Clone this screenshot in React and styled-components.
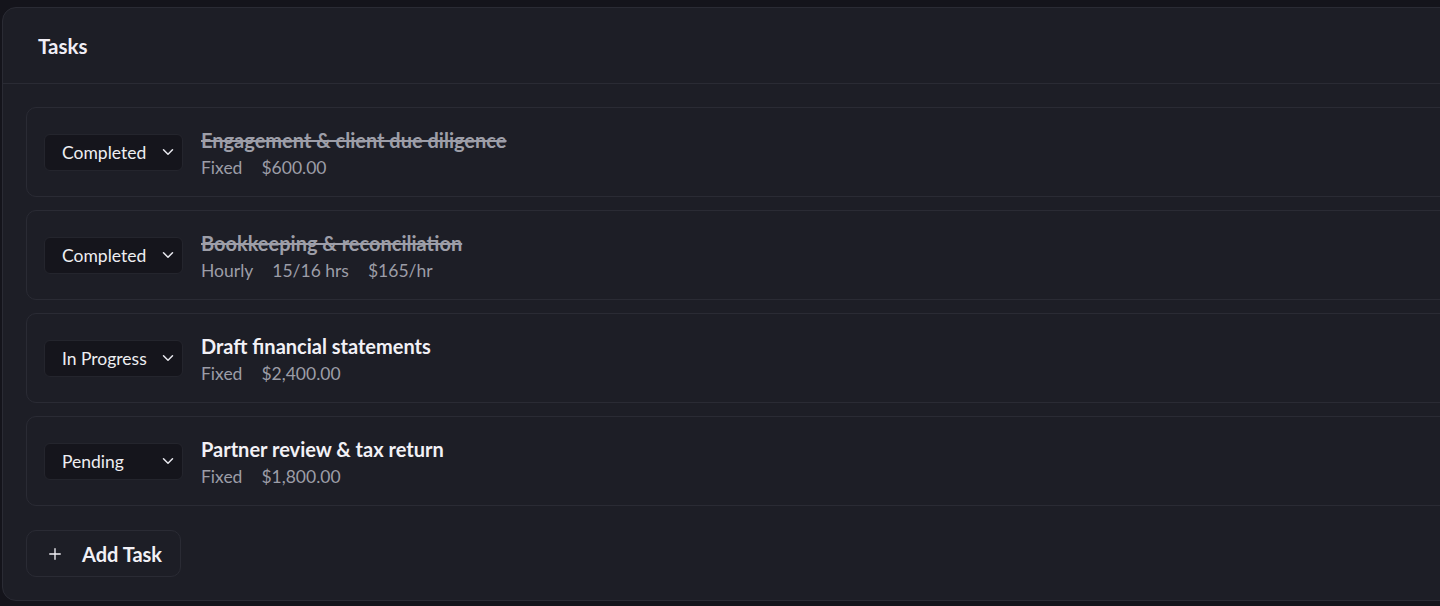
import React from 'react';
import styled, { createGlobalStyle } from 'styled-components';
import { ChevronDown, Plus } from 'lucide-react';

const GlobalStyle = createGlobalStyle`
    html, body {
        margin: 0;
        padding: 0;
        background: #14141b;
        font-family: "Lato", "Inter", sans-serif;
        overflow: hidden;
    }
`

const Page = styled.div`
    padding: 7px 0 0 2px;
    width: 1520px;
`

const Card = styled.div`
    background: #1d1e26;
    border: 1px solid #2a2b34;
    border-radius: 14px;
`

const Header = styled.div`
    height: 75px;
    display: flex;
    align-items: center;
    padding: 0 35px;
    border-bottom: 1px solid #2a2b34;
`

const Title = styled.h2`
    margin: 0;
    font-size: 20.5px;
    font-weight: 700;
    color: #f1eef6;
`

const Body = styled.div`
    padding: 23px;
    display: flex;
    flex-direction: column;
    gap: 13px;
`

const Row = styled.div`
    height: 88px;
    display: flex;
    align-items: center;
    gap: 18px;
    padding: 0 17px;
    border: 1px solid #2a2b34;
    border-radius: 10px;
`

const Select = styled.div`
    width: 139px;
    height: 37px;
    box-sizing: border-box;
    display: flex;
    align-items: center;
    justify-content: space-between;
    padding: 0 5px 0 17px;
    background: #15151c;
    border: 1px solid #24252d;
    border-radius: 6px;
    color: #eeeef2;
    font-size: 17.5px;
`

const Info = styled.div`
    display: flex;
    flex-direction: column;
    gap: 5px;
    padding-top: 2px;
`

const TaskName = styled.div`
    font-size: 20px;
    font-weight: 700;
    color: ${({ done }) => (done ? '#9d9ea8' : '#f2f1f6')};
    text-decoration: ${({ done }) => (done ? 'line-through' : 'none')};
`

const Meta = styled.div`
    display: flex;
    gap: 19px;
    font-size: 17.5px;
    color: #9c9da7;
`

const AddButton = styled.button`
    margin-top: 11px;
    align-self: flex-start;
    width: 155px;
    height: 47px;
    display: flex;
    align-items: center;
    gap: 18px;
    padding: 0 0 0 19px;
    background: transparent;
    border: 1px solid #2a2b34;
    border-radius: 10px;
    color: #f2f1f6;
    font-family: inherit;
    font-size: 20px;
    font-weight: 700;
    cursor: pointer;
`

const tasks = [
    { status: 'Completed', name: 'Engagement & client due diligence', meta: ['Fixed', '$600.00'], done: true },
    { status: 'Completed', name: 'Bookkeeping & reconciliation', meta: ['Hourly', '15/16 hrs', '$165/hr'], done: true },
    { status: 'In Progress', name: 'Draft financial statements', meta: ['Fixed', '$2,400.00'] },
    { status: 'Pending', name: 'Partner review & tax return', meta: ['Fixed', '$1,800.00'] },
]

const App = () => {
    return (
        <Page>
            <GlobalStyle />
            <Card>
                <Header>
                    <Title>Tasks</Title>
                </Header>
                <Body>
                    {tasks.map((t, i) => (
                        <Row key={i}>
                            <Select>
                                {t.status}
                                <ChevronDown size={18} strokeWidth={2} color="#e8e8ee" />
                            </Select>
                            <Info>
                                <TaskName done={t.done}>{t.name}</TaskName>
                                <Meta>
                                    {t.meta.map((m) => <span key={m}>{m}</span>)}
                                </Meta>
                            </Info>
                        </Row>
                    ))}
                    <AddButton>
                        <Plus size={18} strokeWidth={1.8} />
                        Add Task
                    </AddButton>
                </Body>
            </Card>
        </Page>
    )
}

export default App;
